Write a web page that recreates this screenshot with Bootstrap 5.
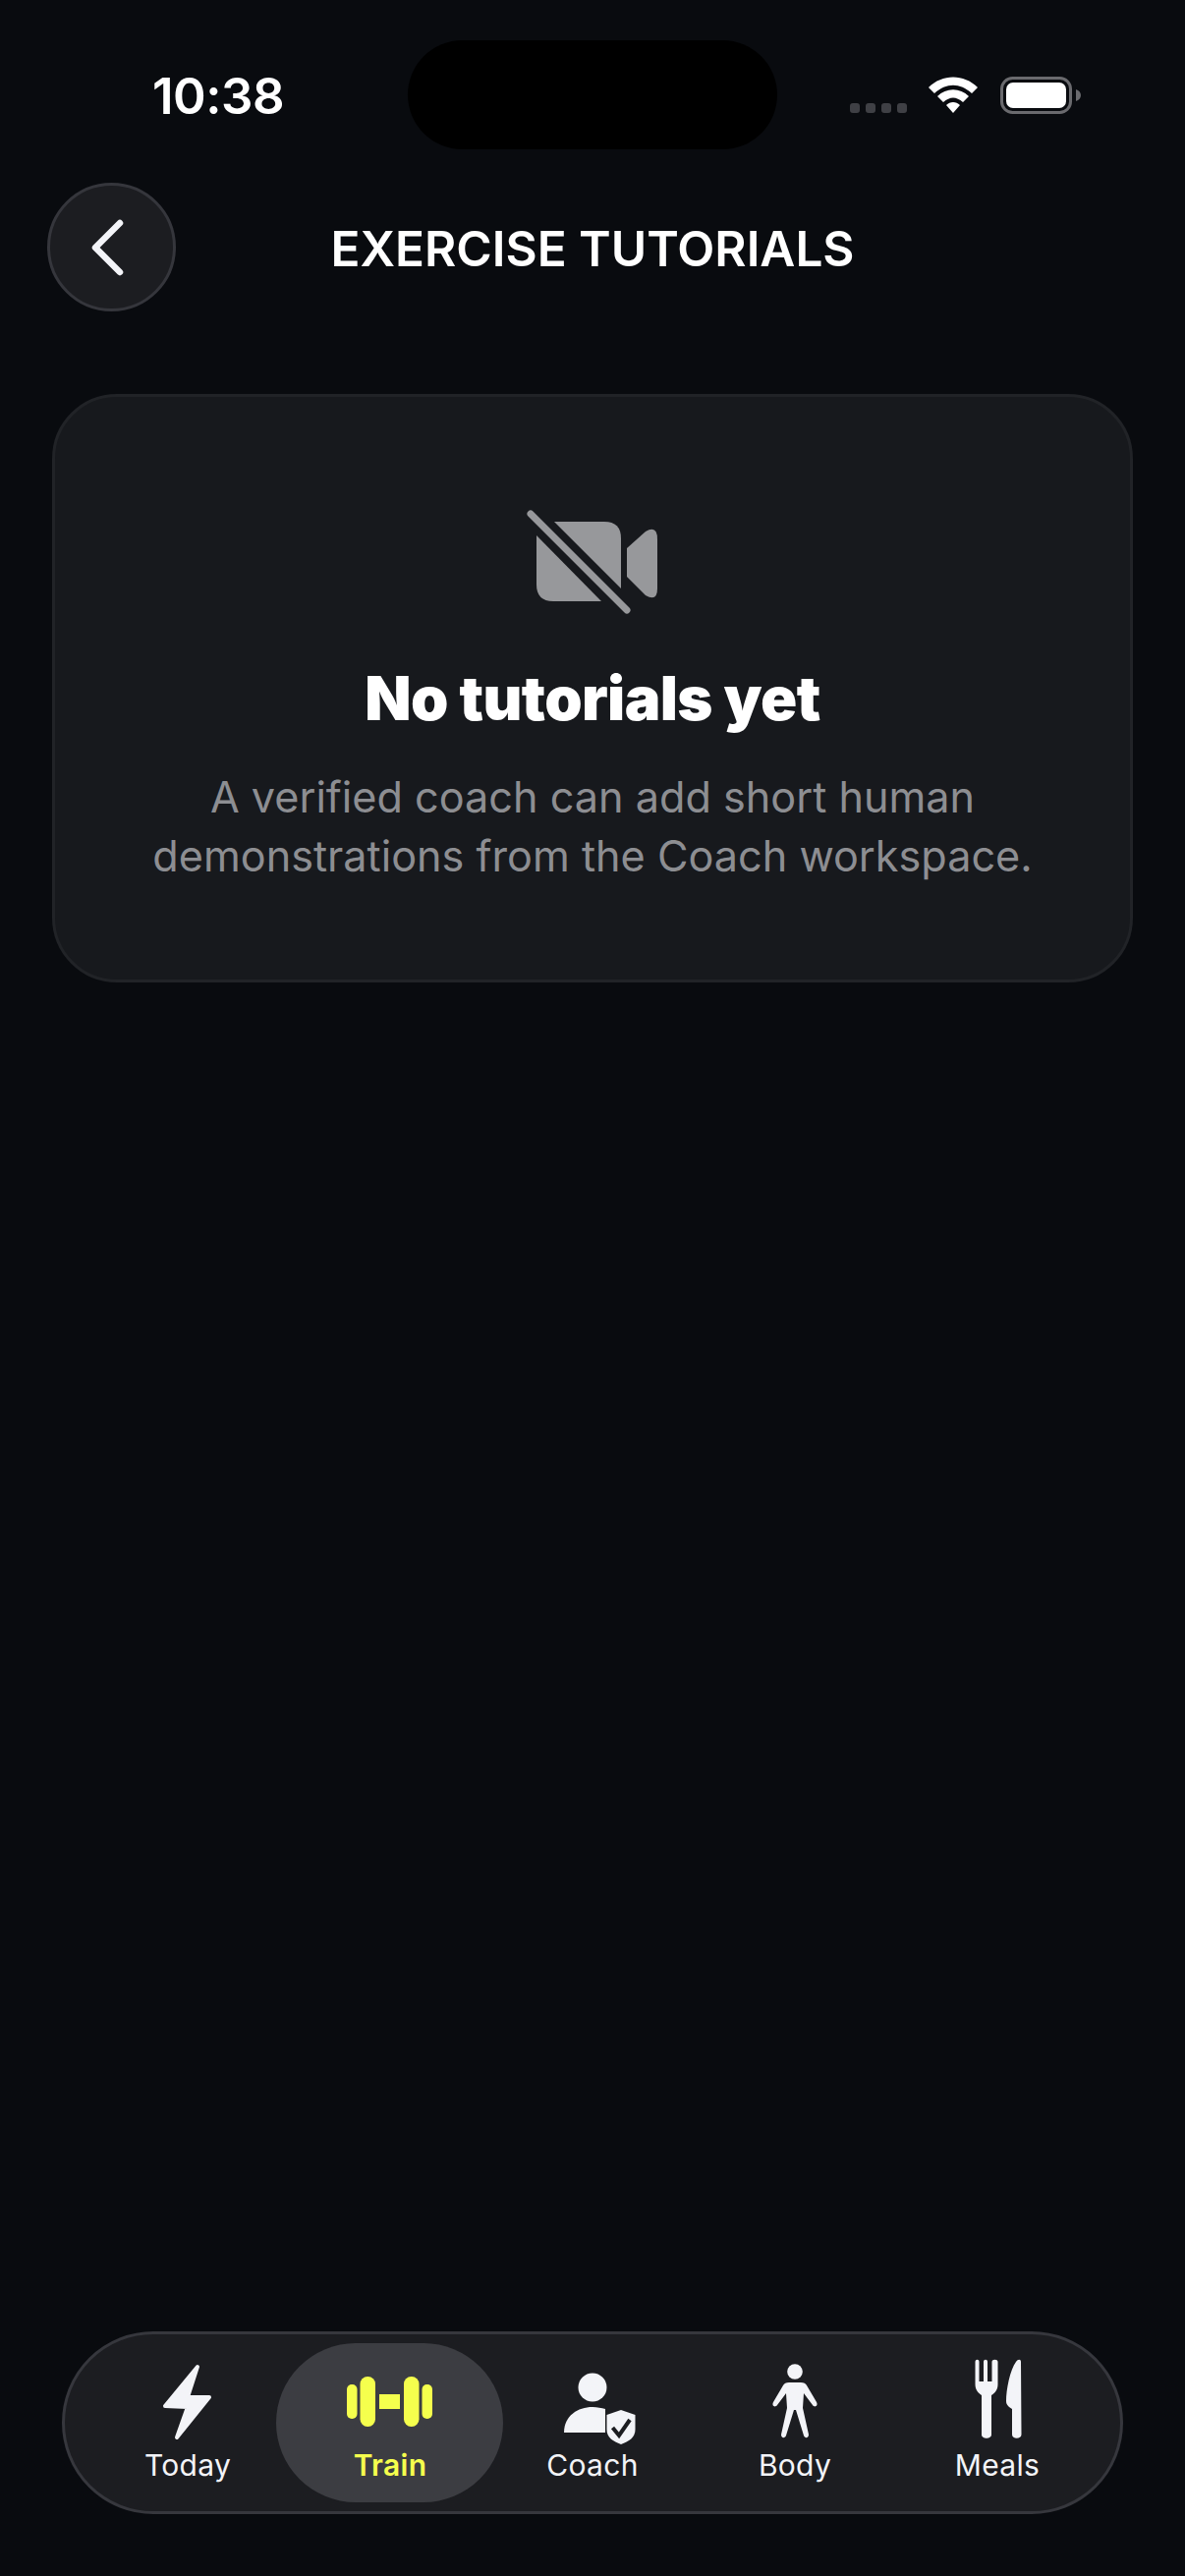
<!DOCTYPE html>
<html lang="en">
<head>
  <meta charset="UTF-8" />
  <meta name="viewport" content="width=device-width, initial-scale=1.0" />
  <title>Exercise Tutorials</title>
  <link href="https://cdn.jsdelivr.net/npm/bootstrap@5.3.2/dist/css/bootstrap.min.css" rel="stylesheet">
  <style>
    body { background: #090b0f; color: #fff; font-family: "Inter", "Liberation Sans", sans-serif; min-height: 2622px; }
    .status-row { height: 111px; margin-top: 41px; padding-left: 155px; }
    .status-time { width: 260px; font-size: 51px; font-weight: 600; line-height: 1; padding-top: 2px; letter-spacing: -.5px; }
    .island { width: 376px; height: 111px; background: #000; border-radius: 56px; }
    .status-right { margin-left: 74px; }
    .sig-dots { gap: 6px; margin-top: 26px; margin-right: 22px; }
    .sig-dots span { width: 10px; height: 10px; border-radius: 3px; background: #3f4045; }
    .wifi-icon { margin-right: 23px; }
    .top-head { margin-top: 34px; padding: 0 48px; display: grid; grid-template-columns: 131px 1fr 131px; align-items: center; }
    .back-btn { width: 131px; height: 131px; border-radius: 50%; background: #1c1d21; border: 3px solid #35363c; padding: 0 7px 0 0; }
    .page-title { font-size: 49.5px; font-weight: 600; margin: 0; padding-top: 4px; line-height: 1; text-align: center; }
    .empty-card { margin: 84px 53px 0 53px; height: 599px; background: #17191d; border: 3px solid #212327; border-radius: 66px; padding-top: 115px; }
    .empty-icon { transform: translateX(-1px); }
    .empty-title { font-size: 61.5px; font-weight: 900; line-height: 74px; margin: 49px 0 0; letter-spacing: -.6px; }
    .empty-text { font-size: 43.2px; font-weight: 400; line-height: 60px; color: #8d8e92; margin: 33px 0 0; }
    .tabbar { margin: auto 63px 63px; height: 186px; background: #1c1d21; border: 3px solid #36373d; border-radius: 93px; padding: 0 21px; }
    .tab-item { width: 206px; height: 100%; position: relative; color: #f3f4f8; font-size: 30px; font-weight: 400; letter-spacing: .3px; }
    .tab-item svg { position: absolute; left: 0; top: 0; }
    .tab-label { position: absolute; left: 1px; right: -1px; top: 113px; line-height: 40px; text-align: center; }
    .tab-item.on { color: #f5ff4d; font-weight: 600; }
    .tab-item.on::before { content: ""; position: absolute; left: -12px; right: -13px; top: 9px; bottom: 9px; background: #3c3d42; border-radius: 81px; }
  </style>
</head>
<body class="d-flex flex-column">
  <div class="status-row d-flex align-items-center">
    <div class="status-time">10:38</div>
    <div class="island"></div>
    <div class="status-right d-flex align-items-center">
      <div class="sig-dots d-flex"><span></span><span></span><span></span><span></span></div>
      <svg class="wifi-icon" width="50" height="37" viewBox="0 0 50 37"><path d="M0 11 C14 -3 36 -3 50 11 L44 17 C32 6 18 6 6 17Z M9 20 C18 11 32 11 41 20 L35 26 C28 20 22 20 15 26Z M18 29 C22 25 28 25 32 29 L25 37Z" fill="#fff"/></svg>
      <svg width="82" height="38" viewBox="0 0 82 38"><rect x="1.500" y="1.500" width="70" height="35" rx="11" fill="none" stroke="#6a6a6e" stroke-width="3"/><rect x="6" y="6" width="61" height="26" rx="7" fill="#fff"/><path d="M77 13 C80 14 82 16 82 19 C82 22 80 24 77 25Z" fill="#6a6a6e"/></svg>
    </div>
  </div>

  <div class="top-head">
    <button class="back-btn d-flex align-items-center justify-content-center" type="button" aria-label="Back">
      <svg width="38" height="58" viewBox="0 0 38 58"><path d="M31 4 L6 29 L31 54" fill="none" stroke="#f3f4f8" stroke-width="6.500" stroke-linecap="round" stroke-linejoin="round"/></svg>
    </button>
    <h1 class="page-title">EXERCISE TUTORIALS</h1>
    <div></div>
  </div>

  <div class="empty-card text-center">
    <svg width="133" height="106" viewBox="0 0 133 106" class="empty-icon d-block mx-auto">
      <path d="M28 12 H79 Q96 12 96 29 V80Z" fill="#97989b"/>
      <path d="M10 26 L76 93 H27 Q10 93 10 76Z" fill="#97989b"/>
      <path d="M102 39 L121 22 Q133 15 133 30 V80 Q133 94 121 87 L102 68Z" fill="#97989b"/>
      <path d="M4 4 L102 102" stroke="#97989b" stroke-width="7" stroke-linecap="round"/>
    </svg>
    <h2 class="empty-title">No tutorials yet</h2>
    <p class="empty-text">A verified coach can add short human<br>demonstrations from the Coach workspace.</p>
  </div>

  <nav class="tabbar d-flex">
    <div class="tab-item">
      <!-- viewBox uses page pixels, tab 1 starts at x=87, y=2376 -->
      <svg width="206" height="120" viewBox="87 2376 206 120"><path d="M201 2409 L191 2440 H213 L180 2481 L191 2450 L168 2449Z" fill="#f3f4f8" stroke="#f3f4f8" stroke-width="4" stroke-linejoin="round"/></svg>
      <div class="tab-label">Today</div>
    </div>
    <div class="tab-item on">
      <svg width="206" height="120" viewBox="293 2376 206 120" fill="#f5ff4d"><rect x="353" y="2427" width="10.500" height="35" rx="5"/><rect x="366.500" y="2419" width="15.500" height="51" rx="7.500"/><rect x="386" y="2437" width="21" height="15"/><rect x="411" y="2419" width="15.500" height="51" rx="7.500"/><rect x="429.500" y="2427" width="10.500" height="35" rx="5"/></svg>
      <div class="tab-label">Train</div>
    </div>
    <div class="tab-item">
      <svg width="206" height="120" viewBox="499 2376 206 120" fill="#f3f4f8">
        <circle cx="603" cy="2430" r="14.500"/>
        <path d="M574 2476 C574 2459 588 2450 603 2450 C608 2450 612 2451 616 2452 L616 2476Z"/>
        <path d="M632 2453 L646.500 2458 V2473 C646.500 2481 640 2485 632 2488 C624 2485 617.500 2481 617.500 2473 V2458Z"/>
        <path d="M623.500 2471 L630 2479 L641 2463" fill="none" stroke="#1c1d21" stroke-width="4"/>
      </svg>
      <div class="tab-label">Coach</div>
    </div>
    <div class="tab-item">
      <svg width="206" height="120" viewBox="705 2376 206 120" fill="#f3f4f8">
        <circle cx="809" cy="2414" r="7.800"/>
        <path d="M803 2425 H815 C818 2425 820 2426 821 2428 L831 2445 C833 2449 829 2451 827 2448 L818 2436 L817 2451 L823 2478 C823 2482 819 2482 818 2479 L810 2453 H808 L800 2479 C799 2482 795 2482 795 2478 L801 2451 L800 2436 L791 2448 C789 2451 785 2449 787 2445 L797 2428 C798 2426 800 2425 803 2425Z"/>
      </svg>
      <div class="tab-label">Body</div>
    </div>
    <div class="tab-item">
      <svg width="206" height="120" viewBox="911 2376 206 120" fill="#f3f4f8">
        <path d="M992.500 2404 C992.500 2401 996.500 2401 996.500 2404 V2424 H1001 V2404 C1001 2401 1005 2401 1005 2404 V2424 H1009.500 V2404 C1009.500 2401 1015.500 2401 1015.500 2404 V2427 C1015.500 2433 1012 2436 1009 2438 V2478 C1009 2483 999 2483 999 2478 V2438 C996 2436 992.500 2433 992.500 2427Z"/>
        <path d="M1039 2404 C1039 2401 1036 2401 1034 2404 C1028 2412 1024 2432 1024 2444 C1024 2448 1027 2450 1030 2452 V2478 C1030 2483 1039.500 2483 1039.500 2478Z"/>
      </svg>
      <div class="tab-label">Meals</div>
    </div>
  </nav>

  <script src="https://cdn.jsdelivr.net/npm/bootstrap@5.3.2/dist/js/bootstrap.bundle.min.js"></script>
</body>
</html>
